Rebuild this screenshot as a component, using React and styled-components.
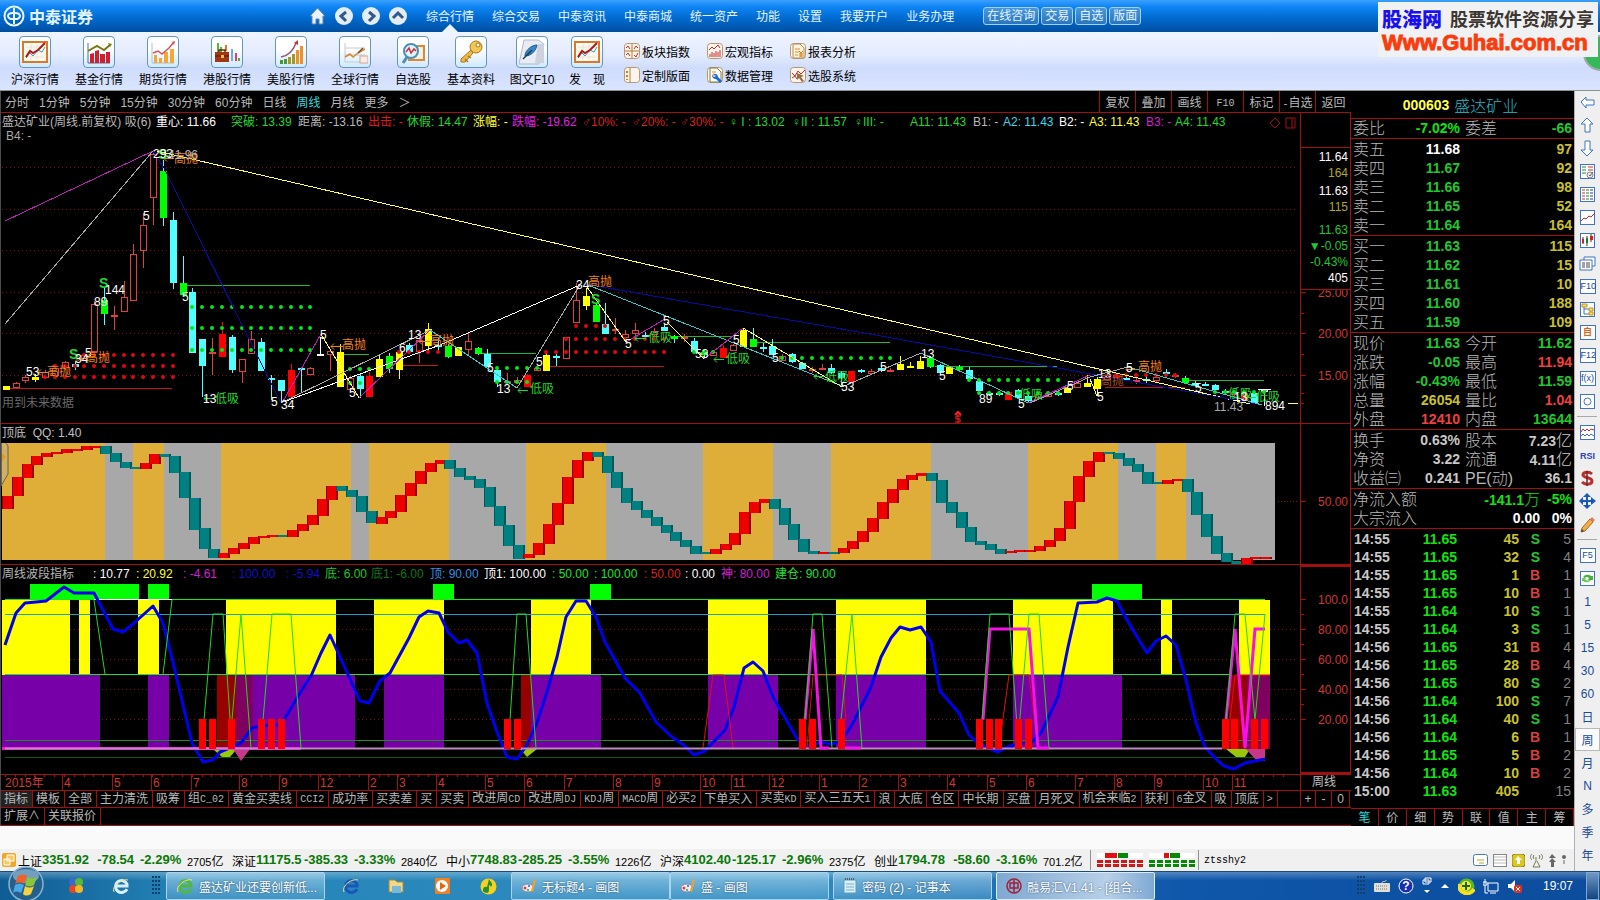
import React, { useState } from 'react';
import styled, { createGlobalStyle } from 'styled-components';

const GlobalStyle = createGlobalStyle`
  * {
    box-sizing: border-box;
  }
  body {
    margin: 0;
    background: #000;
    font-family: 'Liberation Sans', 'Noto Sans CJK SC', sans-serif;
    font-size: 12px;
  }
  button {
    margin: 0;
    padding: 0;
    border: none;
    background: none;
    color: inherit;
    font: inherit;
    cursor: pointer;
  }
  a {
    color: inherit;
    text-decoration: none;
  }
  svg {
    display: block;
    flex: none;
  }
`;

const RED = '#a01010';
const STEP = 9.83;

const Page = styled.div`
  position: relative;
  display: flex;
  flex-direction: column;
  min-height: 100vh;
  overflow: hidden;
`;

/* ---------- top bar ---------- */

const TopBar = styled.header`
  display: flex;
  align-items: center;
  height: 32px;
  padding-left: 3px;
  color: #e4f4ff;
  white-space: nowrap;
  background: linear-gradient(#3ba0ff 0%, #0d84f4 22%, #0068cc 60%, #004f9f 100%);
`;

const Brand = styled.div`
  display: flex;
  align-items: center;
  gap: 4px;
  width: 306px;
  font-size: 16px;
  font-weight: bold;
`;

const RoundNav = styled.div`
  display: flex;
  align-items: center;
  gap: 9px;
  width: 117px;
`;

const MenuBar = styled.nav`
  display: flex;
  gap: 18px;
  height: 32px;
  line-height: 34px;
  margin-right: 29px;
`;

const MenuLink = styled.a`
  position: relative;
  height: 32px;
  &::after {
    content: '';
    display: ${(p) => (p.$active ? 'block' : 'none')};
    position: absolute;
    left: 50%;
    bottom: 0;
    margin-left: -8px;
    border: 8px solid transparent;
    border-top: none;
    border-bottom-color: #eef4ff;
  }
`;

const QuickList = styled.div`
  display: flex;
  gap: 2px;
`;

const QuickButton = styled.button`
  height: 18px;
  padding: 0 3px;
  border: 1px solid #9fd0f8;
  border-radius: 3px;
  line-height: 16px;
  background: linear-gradient(#4a98dc, #2a74bc);
`;

const Watermark = styled.aside`
  position: absolute;
  top: 2px;
  right: 2px;
  width: 220px;
  height: 55px;
  padding: 3px 4px;
  background: #f0f1f3;
  white-space: nowrap;
`;

const WatermarkTop = styled.div`
  display: flex;
  align-items: center;
  gap: 8px;
  height: 26px;
  color: #3c3530;
  font-size: 18px;
  font-weight: bold;
  b {
    color: #1a10f0;
    font-size: 20px;
    font-weight: 900;
  }
`;

const WatermarkUrl = styled.a`
  display: block;
  color: #fa3c0c;
  font-size: 22px;
  font-weight: 900;
  line-height: 24px;
  -webkit-text-stroke: 1px #fa3c0c;
`;

const GreenBall = styled.div`
  position: absolute;
  top: 35px;
  right: -19px;
  width: 36px;
  height: 36px;
  border: 2px solid #9aa;
  border-radius: 50%;
  background: #35b85a;
`;

/* ---------- tool bar ---------- */

const ToolBar = styled.div`
  display: flex;
  height: 59px;
  padding-left: 3px;
  border-bottom: 1px solid #8a9490;
  color: #000;
  background: linear-gradient(#eff4ff 0%, #e3ebfe 40%, #cfdcfb 62%, #d9e4ff 100%);
`;

const BigTool = styled.button`
  display: flex;
  flex-direction: column;
  align-items: center;
  width: ${(p) => p.$w}px;
  padding-top: 4px;
  line-height: 18px;
  white-space: pre;
`;

const ToolFrame = styled.span`
  display: grid;
  place-items: center;
  width: 32px;
  height: 32px;
  margin-bottom: 3px;
  border: 1px solid #6796bd;
  border-radius: 4px;
  background: linear-gradient(#ffffff 40%, #cfe9fc);
`;

const SmallTools = styled.div`
  display: grid;
  grid-template-columns: repeat(3, 83px);
  grid-template-rows: 24px 24px;
  margin-left: 11px;
  padding-top: 7px;
`;

const SmallTool = styled.button`
  display: flex;
  align-items: center;
  gap: 2px;
`;

/* ---------- work area ---------- */

const WorkArea = styled.div`
  display: flex;
  flex: 1;
`;

const LeftPart = styled.div`
  display: flex;
  flex: 1;
  flex-direction: column;
  min-width: 0;
`;

const Workspace = styled.main`
  display: flex;
  border-left: 1px solid #4a4a4a;
  background: #000;
`;

const ChartColumn = styled.section`
  flex: 1;
  min-width: 0;
`;

const PeriodBar = styled.div`
  display: flex;
  align-items: center;
  height: 22px;
  padding-left: 4px;
  border-bottom: 1px solid ${RED};
  color: #b8b8b8;
  white-space: nowrap;
`;

const Periods = styled.div`
  display: flex;
  flex: 1;
  gap: 10px;
`;

const PeriodButton = styled.button`
  color: ${(p) => (p.$active ? '#30d8d8' : '#b8b8b8')};
`;

const ChartAction = styled.button`
  width: 36px;
  height: 21px;
  border-left: 1px solid ${RED};
`;

const Panel = styled.div`
  display: flex;
  border-bottom: 1px solid ${RED};
`;

const Plot = styled.div`
  flex: 1;
  min-width: 0;
  overflow: hidden;
`;

const Legend = styled.div`
  display: flex;
  flex-wrap: nowrap;
  height: ${(p) => p.$h}px;
  padding: 1px 1px 0;
  line-height: 17px;
  white-space: nowrap;
`;

const LegendItem = styled.span`
  flex: none;
  width: ${(p) => (p.$w ? p.$w + 'px' : 'auto')};
  color: ${(p) => p.$c};
`;

const LegendTail = styled.div`
  display: flex;
  gap: 4px;
  margin-left: auto;
  padding: 3px 3px 0 0;
`;

const LegendLine = styled.div`
  height: 12px;
  padding-left: 5px;
  color: #a8a8a8;
  line-height: 12px;
`;

const Axis = styled.div`
  flex: none;
  width: 51px;
  border-left: 1px solid ${RED};
  border-right: 1px solid ${RED};
`;

const BoxedAxis = styled(Axis)`
  border: 2px solid ${RED};
  border-right-width: 1px;
  border-left-width: 1px;
`;

const PriceBox = styled.div`
  display: flex;
  flex-direction: column;
  margin-top: 34px;
  height: 143px;
  padding: 1px 2px;
  border-top: 1px solid ${RED};
  border-bottom: 1px solid ${RED};
  text-align: right;
  line-height: 16px;
`;

const PriceGroup = styled.div`
  margin-bottom: ${(p) => p.$gap}px;
`;

const PriceLine = styled.div`
  color: ${(p) => p.$c};
`;

const PeriodName = styled.div`
  flex: none;
  width: 51px;
  padding-left: 11px;
  border-left: 1px solid ${RED};
  color: #c0c0c0;
  line-height: 14px;
`;

const TabRow = styled.div`
  display: flex;
  height: ${(p) => p.$h}px;
  border-bottom: 1px solid ${RED};
  color: #b8b8b8;
  white-space: nowrap;
`;

const TabList = styled.div`
  display: flex;
  flex: 1;
  min-width: 0;
`;

const Tab = styled.button`
  flex: none;
  padding: 0 4px 0 3px;
  border-right: 1px solid ${RED};
  line-height: 15px;
  background: ${(p) => (p.$active ? '#222' : 'none')};
`;

const Latin = styled.span`
  font-family: 'Liberation Mono', monospace;
  font-size: 10px;
`;

const ZoomBox = styled.div`
  display: grid;
  grid-template-columns: 15px 16px 18px;
  flex: none;
  width: 51px;
  border-left: 1px solid ${RED};
  button {
    border-right: 1px solid ${RED};
  }
`;

/* ---------- quote panel ---------- */

const QuotePanel = styled.section`
  display: flex;
  flex: none;
  flex-direction: column;
  width: 223px;
  color: #b8b8b8;
  font-size: 16px;
`;

const QuoteTitle = styled.h1`
  display: flex;
  align-items: center;
  justify-content: center;
  gap: 5px;
  height: 28px;
  margin: 0;
  padding-right: 4px;
  border-bottom: 1px solid ${RED};
  color: #28b8c8;
  font-size: 16px;
  font-weight: 300;
  b {
    color: #ffff50;
    font-size: 14px;
    font-weight: bold;
  }
`;

const QuoteBlock = styled.div`
  padding: ${(p) => p.$pad || '1px'} 2px 0;
  border-bottom: 1px solid ${RED};
`;

const QuoteRow = styled.div`
  display: grid;
  grid-template-columns: 1fr 1fr;
  column-gap: 5px;
  height: 19px;
  line-height: 19px;
  white-space: nowrap;
`;

const QuoteCell = styled.div`
  display: flex;
  justify-content: space-between;
  font-weight: 300;
`;

const Figure = styled.b`
  color: ${(p) => p.$c};
  font-size: 14px;
  font-weight: bold;
  i {
    font-size: 16px;
    font-style: normal;
    font-weight: 300;
  }
`;

const FlowRow = styled.div`
  display: grid;
  grid-template-columns: 1fr auto 32px;
  height: 19px;
  line-height: 19px;
  font-weight: 300;
  text-align: right;
  white-space: nowrap;
  span {
    text-align: left;
  }
`;

const TickTable = styled.table`
  width: 100%;
  margin-top: 1px;
  border-collapse: collapse;
  font-size: 14px;
  font-weight: bold;
  td {
    height: 18px;
    padding: 0;
    line-height: 18px;
    text-align: right;
  }
  td:first-child {
    width: 39px;
    padding-left: 3px;
    color: #c8c8c8;
    text-align: left;
  }
  td:nth-child(2) {
    width: 67px;
    color: #14e014;
  }
  td:nth-child(3) {
    width: 62px;
    color: #c8c030;
  }
  td:nth-child(4) {
    width: 21px;
    color: #20c830;
  }
  td:nth-child(4)[data-side='B'] {
    color: #d84040;
  }
  td:last-child {
    padding-right: 3px;
    color: #808080;
    font-weight: normal;
  }
`;

const QuoteTabs = styled.div`
  display: grid;
  grid-template-columns: repeat(8, 1fr);
  height: 18px;
  margin-top: auto;
  border-top: 1px solid ${RED};
  color: #b8b8b8;
  font-size: 12px;
  button {
    border-right: 1px solid ${RED};
    line-height: 16px;
  }
  button[aria-pressed='true'] {
    color: #30d8d8;
  }
`;

/* ---------- side bar ---------- */

const SideBar = styled.aside`
  flex: none;
  width: 26px;
  border-left: 1px solid #b0b0b0;
  background: #efefef;
  color: #1a4a9a;
`;

const SideButton = styled.button`
  display: grid;
  place-items: center;
  width: 25px;
  height: 23px;
  border: ${(p) => (p.$active ? '1px solid #b8b8b8' : 'none')};
  background: ${(p) => (p.$active ? '#fafafa' : 'none')};
  color: ${(p) => p.$c || '#1a4a9a'};
  font-size: ${(p) => p.$size || 12}px;
  font-weight: ${(p) => (p.$bold ? 'bold' : 'normal')};
`;

const SideBox = styled.span`
  width: 16px;
  height: 15px;
  border: 1px solid #3f74c4;
  background: #fff;
  font-size: 9px;
  line-height: 13px;
  text-align: center;
`;

const SideLine = styled.hr`
  width: 20px;
  height: 1px;
  margin: 3px 2px 4px;
  border: none;
  background: #a8a8a8;
`;

/* ---------- bottom ---------- */

const Blank = styled.div`
  flex: 1;
  min-height: 23px;
  background: #fafafa;
`;

const StatusBar = styled.footer`
  display: flex;
  align-items: center;
  height: 22px;
  padding-left: 2px;
  background: #f0f0f0;
  color: #000;
  white-space: nowrap;
`;

const IndexQuote = styled.div`
  display: grid;
  grid-template-columns: 24px 48px 44px 53px 45px;
  margin-left: ${(p) => (p.$first ? '2px' : '0')};
  b {
    color: #087808;
    font-size: 13px;
  }
  b:nth-of-type(2) {
    text-align: right;
  }
  b:nth-of-type(3) {
    padding-left: 6px;
  }
  small {
    font-size: 11px;
  }
`;

const LightBox = styled.div`
  height: 20px;
  margin-left: 2px;
  padding: 3px 3px 0 6px;
  border-left: 1px solid #909090;
  border-right: 1px solid #909090;
`;

const UserName = styled.span`
  flex: 1;
  padding-left: 5px;
  font-family: 'Liberation Mono', monospace;
  font-size: 10px;
`;

const StatusIcons = styled.div`
  display: flex;
  align-items: center;
  gap: 5px;
  padding-right: 7px;
`;

const TaskBar = styled.footer`
  position: relative;
  display: flex;
  align-items: center;
  height: 29px;
  padding-left: 56px;
  color: #fff;
  border-top: 1px solid #1c4c78;
  white-space: nowrap;
  background: linear-gradient(rgba(255, 255, 255, 0.28), rgba(255, 255, 255, 0) 30%),
    linear-gradient(90deg, #0e5c94 0%, #2685b8 12%, #2f8cc0 50%, #0f57aa 74%, #0c4c9c 100%);
`;

const StartButton = styled.button`
  position: absolute;
  left: 8px;
  bottom: -2px;
`;

const LaunchIcon = styled.button`
  display: grid;
  place-items: center;
  width: ${(p) => p.$w}px;
  height: 28px;
`;

const TaskButton = styled.button`
  display: flex;
  align-items: center;
  gap: 5px;
  width: 159px;
  height: 28px;
  margin-right: ${(p) => (p.$joined ? 0 : 4)}px;
  padding-left: ${(p) => p.$pad || 9}px;
  border: 1px solid ${(p) => (p.$active ? '#d8ecfa' : '#a8d4ec')};
  border-radius: 2px;
  background: ${(p) =>
    p.$active
      ? 'linear-gradient(90deg, #7fa8d2, #b8d0e8 70%, #7fa9d4)'
      : 'linear-gradient(rgba(190, 225, 245, 0.6), rgba(90, 165, 210, 0.45))'};
  text-shadow: 0 0 2px #246;
`;

const Tray = styled.div`
  display: flex;
  align-items: center;
  gap: 8px;
  margin-left: auto;
`;

const Clock = styled.time`
  margin: 0 5px 0 12px;
`;

const ShowDesktop = styled.button`
  width: 13px;
  height: 28px;
  margin-right: 1px;
  border: 1px solid #7ea8d0;
  background: linear-gradient(#6f98c4, #14447e);
`;

/* ---------- data ---------- */

const menu = ['综合行情', '综合交易', '中泰资讯', '中泰商城', '统一资产', '功能', '设置', '我要开户', '业务办理'];
const quick = ['在线咨询', '交易', '自选', '版面'];
const periods = ['分时', '1分钟', '5分钟', '15分钟', '30分钟', '60分钟', '日线', '周线', '月线', '更多', '＞'];
const actions = ['复权', '叠加', '画线', 'F10', '标记', '-自选', '返回'];

const bigTools = [
  ['沪深行情', 64, 'frame'],
  ['基金行情', 64, 'redbars'],
  ['期货行情', 64, 'orangebars'],
  ['港股行情', 64, 'bag'],
  ['美股行情', 64, 'rise'],
  ['全球行情', 64, 'global'],
  ['自选股', 52, 'magnifier'],
  ['基本资料', 64, 'key'],
  ['图文F10', 58, 'pen'],
  ['发　现', 52, 'frame'],
];

const smallTools = [
  ['板块指数', 'cross'],
  ['宏观指标', 'bars'],
  ['报表分析', 'sheet'],
  ['定制版面', 'layout'],
  ['数据管理', 'wrench'],
  ['选股系统', 'pick'],
];

const legend1 = [
  ['盛达矿业(周线.前复权) 吸(6)', '#b8b8b8', 154],
  ['重心: 11.66', '#ffffff', 75],
  ['突破: 13.39', '#20d830', 67],
  ['距离: -13.16', '#b8b8b8', 70],
  ['出击: -', '#e01818', 39],
  ['休假: 14.47', '#20d830', 66],
  ['涨幅: -', '#ffff30', 39],
  ['跌幅: -19.62', '#e020e0', 70],
  ['♂10%: -', '#d82020', 50],
  ['♂20%: -', '#d82020', 48],
  ['♂30%: -', '#d82020', 49],
  ['♀ I : 13.02', '#20d830', 63],
  ['♀II : 11.57', '#20d830', 62],
  ['♀III: -', '#20d830', 56],
  ['A11: 11.43', '#20d830', 63],
  ['B1: -', '#b8b8b8', 30],
  ['A2: 11.43', '#38d8e8', 56],
  ['B2: -', '#ffffff', 30],
  ['A3: 11.43', '#ffff30', 57],
  ['B3: -', '#d020d0', 29],
  ['A4: 11.43', '#20d830'],
];

const legend3 = [
  ['周线波段指标', '#b8b8b8', 91],
  [': 10.77', '#ffffff', 43],
  [': 20.92', '#ffff30', 47],
  [': -4.61', '#d020d0', 49],
  [': 100.00', '#1010c0', 54],
  [': -5.94', '#1010c0', 39],
  ['底: 6.00', '#20c830', 46],
  ['底1: -6.00', '#107818', 59],
  ['顶: 90.00', '#3890e0', 54],
  ['顶1: 100.00', '#ffffff', 68],
  [': 50.00', '#20e030', 42],
  [': 100.00', '#20e030', 50],
  [': 50.00', '#d82020', 41],
  [': 0.00', '#ffffff', 36],
  ['神: 80.00', '#d020d0', 54],
  ['建仓: 90.00', '#20e030'],
];

const tabs = [
  '指标', '模板', '全部', '主力清洗', '吸筹', '组C_02', '黄金买卖线', 'CCI2', '成功率', '买卖差', '买',
  '买卖', '改进周CD', '改进周DJ', 'KDJ周', 'MACD周', '必买2', '下单买入', '买卖KD', '买入三五天1', '浪',
  '大底', '仓区', '中长期', '买盘', '月死叉', '机会来临2', '获利', '6金叉', '吸', '顶底', '>',
];

// [index, kind, high, top, bottom, low]
const candles = [
  [0, 'y', 386, 386, 390, 390], [1, 'r', 382, 383, 388, 388], [2, 'r', 375, 377, 381, 383],
  [3, 'y', 374, 377, 380, 382], [4, 'r', 370, 372, 378, 379], [5, 'r', 366, 368, 376, 376],
  [6, 'r', 361, 362, 368, 370], [7, 'c', 361, 364, 367, 370], [8, 'r', 354, 355, 361, 361],
  [9, 'r', 301, 304, 352, 352], [10, 'g', 288, 300, 314, 325], [11, 'r', 306, 315, 316, 330],
  [12, 'r', 281, 297, 312, 312], [13, 'r', 244, 254, 301, 301], [14, 'r', 213, 225, 251, 268],
  [15, 'r', 150, 154, 198, 225], [16, 'g', 160, 171, 218, 226], [17, 'c', 212, 220, 283, 289],
  [18, 'g', 256, 283, 295, 295], [19, 'c', 288, 292, 353, 353], [20, 'c', 339, 339, 366, 397],
  [21, 'r', 338, 352, 353, 375], [22, 'R', 322, 334, 357, 357], [23, 'c', 335, 337, 370, 373],
  [24, 'r', 359, 359, 372, 383], [25, 'r', 331, 339, 354, 354], [26, 'c', 338, 342, 371, 371],
  [27, 'c', 375, 378, 379, 400], [28, 'c', 380, 380, 391, 403], [29, 'R', 364, 370, 397, 397],
  [30, 'c', 368, 368, 370, 393], [31, 'r', 367, 368, 375, 375], [32, 'w', 337, 354, 356, 356],
  [33, 'r', 350, 351, 355, 371], [34, 'y', 344, 352, 387, 387], [35, 'r', 376, 378, 390, 392],
  [36, 'c', 374, 376, 389, 398], [37, 'R', 372, 376, 397, 397], [38, 'y', 354, 359, 377, 377],
  [39, 'g', 353, 356, 369, 373], [40, 'y', 352, 352, 370, 379], [41, 'c', 343, 345, 352, 354],
  [42, 'r', 338, 340, 352, 363], [43, 'y', 323, 329, 346, 351], [44, 'c', 338, 345, 346, 352],
  [45, 'g', 344, 346, 357, 358], [46, 'y', 347, 347, 356, 356], [47, 'r', 333, 341, 350, 355],
  [48, 'g', 347, 348, 354, 355], [49, 'c', 349, 354, 367, 367], [50, 'c', 368, 370, 382, 387],
  [51, 'r', 373, 381, 383, 383], [52, 'r', 377, 380, 383, 384], [53, 'R', 374, 375, 387, 387],
  [54, 'r', 366, 368, 371, 371], [55, 'y', 353, 355, 371, 371], [56, 'c', 354, 356, 358, 366],
  [57, 'r', 337, 337, 359, 359], [58, 'r', 283, 300, 323, 323], [59, 'y', 288, 296, 306, 310],
  [60, 'g', 303, 305, 322, 322], [61, 'c', 303, 324, 334, 334], [62, 'r', 318, 329, 331, 334],
  [63, 'r', 330, 334, 338, 342], [64, 'r', 323, 330, 334, 338], [65, 'c', 332, 335, 336, 338],
  [66, 'r', 328, 331, 335, 336], [67, 'c', 324, 327, 331, 331], [68, 'g', 335, 336, 339, 343],
  [69, 'r', 334, 337, 338, 342], [70, 'c', 338, 341, 352, 352], [71, 'g', 350, 352, 355, 358],
  [72, 'r', 350, 352, 356, 356], [73, 'R', 345, 348, 358, 358], [74, 'r', 344, 345, 351, 351],
  [75, 'y', 328, 330, 347, 347], [76, 'g', 328, 339, 347, 347], [77, 'c', 343, 347, 348, 352],
  [78, 'c', 339, 346, 355, 355], [79, 'r', 354, 356, 361, 361], [80, 'c', 353, 354, 362, 363],
  [81, 'c', 362, 363, 369, 369], [82, 'r', 367, 369, 370, 373], [83, 'r', 364, 368, 369, 370],
  [84, 'c', 364, 368, 373, 374], [85, 'c', 371, 373, 378, 386], [86, 'R', 371, 371, 382, 382],
  [87, 'c', 369, 370, 372, 373], [88, 'r', 369, 371, 374, 375], [89, 'c', 366, 368, 371, 372],
  [90, 'r', 368, 370, 372, 372], [91, 'y', 356, 364, 370, 370], [92, 'y', 362, 366, 367, 368],
  [93, 'y', 356, 361, 369, 369], [94, 'g', 356, 358, 367, 368], [95, 'c', 364, 365, 373, 373],
  [96, 'y', 366, 367, 374, 374], [97, 'g', 365, 367, 370, 371], [98, 'c', 367, 370, 379, 381],
  [99, 'c', 380, 381, 391, 391], [100, 'c', 391, 393, 394, 396], [101, 'c', 391, 393, 394, 396],
  [102, 'R', 391, 392, 400, 400], [103, 'c', 389, 390, 398, 398], [104, 'c', 394, 396, 401, 402],
  [105, 'r', 393, 394, 398, 399], [106, 'r', 391, 393, 397, 397], [107, 'c', 391, 393, 394, 396],
  [108, 'y', 387, 388, 393, 393], [109, 'r', 382, 383, 388, 388], [110, 'y', 375, 383, 387, 387],
  [111, 'y', 377, 379, 389, 396], [112, 'r', 374, 376, 380, 381], [113, 'R', 374, 375, 378, 378],
  [114, 'c', 375, 378, 379, 381], [115, 'r', 377, 380, 381, 384], [116, 'c', 376, 379, 380, 384],
  [117, 'r', 376, 377, 381, 382], [118, 'c', 369, 372, 374, 376], [119, 'r', 373, 375, 376, 378],
  [120, 'g', 376, 378, 383, 384], [121, 'c', 381, 383, 386, 386], [122, 'c', 382, 384, 385, 386],
  [123, 'c', 384, 385, 390, 390], [124, 'c', 389, 391, 393, 395], [125, 'r', 390, 392, 395, 397],
  [126, 'R', 392, 393, 400, 400], [127, 'c', 391, 393, 403, 403], [128, 'w', 389, 390, 391, 406],
];

const candleColors = { y: '#ffff00', r: '#e04040', R: '#ff0000', c: '#50ffff', g: '#00ff00', w: '#ffffff' };

// [colour, points]
const zigzags = [
  ['#c020c0', '5,221 153,151'],
  ['#a8a8a8', '5,324 153,151'],
  ['#ffff50', '157,151 1250,404'],
  ['#0808a8', '153,151 164,168 281,403'],
  ['#0808a8', '585,284 870,334 1257,404'],
  ['#38c8c8', '588,285 842,386'],
  ['#ffffff', '283,402 440,345 580,285'],
  ['#a8a8a8', '283,402 430,330'],
  ['#c020c0', '282,403 321,334'],
  ['#ffff50', '321,334 359,398'],
  ['#c020c0', '359,398 430,330'],
  ['#38c8c8', '430,330 517,388'],
  ['#a8a8a8', '517,388 580,285'],
  ['#ffff50', '587,287 626,342'],
  ['#c020c0', '626,342 665,319'],
  ['#ffff50', '667,322 704,359'],
  ['#c020c0', '704,359 743,328'],
  ['#ffff50', '743,328 842,387'],
  ['#a8a8a8', '842,387 921,353'],
  ['#38c8c8', '921,353 1028,403'],
  ['#c020c0', '1028,403 1090,375'],
  ['#a8a8a8', '1030,403 1090,377 1128,367'],
  ['#ffff50', '1090,379 1097,396'],
  ['#38c8c8', '1128,367 1262,405'],
];

// [colour, x1, x2, y]
const levels = [
  ['#c01818', 8, 172, 388],
  ['#20b828', 185, 310, 285],
  ['#20b828', 340, 369, 354],
  ['#c01818', 400, 438, 365],
  ['#20b828', 478, 536, 353],
  ['#c01818', 545, 664, 366],
  ['#20b828', 672, 732, 336],
  ['#20b828', 750, 890, 342],
  ['#20b828', 935, 1057, 366],
  ['#c01818', 1105, 1185, 387],
  ['#20b828', 1187, 1264, 380],
  ['#ffffff', 1258, 1271, 389],
  ['#ffff50', 1288, 1298, 403],
];

// [colour, first index, last index, y]
const dotRows = [
  ['#00e818', 19, 31, 307], ['#00e818', 19, 31, 328], ['#00e818', 19, 31, 350],
  ['#e00810', 8, 17, 355], ['#e00810', 5, 17, 366], ['#e00810', 4, 17, 377],
  ['#00e818', 35, 37, 369], ['#00e818', 35, 36, 383], ['#e00810', 40, 44, 352],
  ['#00e818', 50, 54, 368], ['#00e818', 50, 53, 382], ['#e00810', 58, 61, 326],
  ['#e00810', 57, 67, 339], ['#e00810', 55, 67, 352], ['#00e818', 70, 72, 352],
  ['#00e818', 79, 90, 358], ['#00e818', 98, 107, 380], ['#00e818', 99, 107, 393],
  ['#e00810', 113, 119, 375], ['#00e818', 123, 128, 392],
];

const W = '#ffffff';
const O = '#f08020';
const G = '#20d830';
const marks = [
  ['S', G, 99, 284, 1], ['S', G, 69, 355, 1], ['S', G, 158, 155, 1], ['144', W, 105, 290], ['89', W, 94, 302],
  ['5', W, 143, 216], ['5', W, 182, 297], ['53', W, 26, 372], ['34', W, 75, 359], ['5', W, 85, 353],
  ['高抛', O, 174, 159], ['高抛', O, 86, 358], ['高抛', O, 47, 372], ['293', W, 153, 154],
  ['41.96', '#b8b8b8', 168, 155], ['13', W, 203, 399], ['低吸', G, 215, 399], ['5', W, 271, 402],
  ['34', W, 281, 405], ['5', W, 320, 335], ['高抛', O, 342, 345], ['5', W, 349, 393], ['13', W, 408, 335],
  ['6', W, 399, 348], ['高抛', O, 430, 341], ['5', W, 487, 368], ['13', W, 497, 389], ['低吸', G, 530, 389],
  ['5', W, 536, 362], ['34', W, 576, 285], ['高抛', O, 588, 282], ['S', G, 591, 300, 1], ['5', W, 625, 344],
  ['低吸', G, 648, 338], ['5', W, 663, 321], ['53', W, 695, 354], ['低吸', G, 726, 359], ['5', W, 733, 340],
  ['5', W, 772, 358], ['低吸', G, 825, 377], ['53', W, 841, 387], ['5', W, 880, 367], ['13', W, 921, 354],
  ['5', W, 939, 376], ['89', W, 979, 399], ['低吸', G, 1019, 395], ['5', W, 1018, 404], ['5', W, 1067, 386],
  ['高抛', O, 1138, 367], ['13', W, 1098, 374], ['高抛', '#a85020', 1100, 381], ['5', W, 1126, 368],
  ['5', W, 1097, 397], ['5', W, 1195, 388], ['低吸', G, 1228, 394], ['13', W, 1234, 397],
  ['低吸', G, 1256, 397], ['11.43', '#a8a8a8', 1214, 407], ['894', W, 1265, 406], ['用到未来数据', '#686868', 2, 403],
];

const arrows = [
  [38, 48, 372], [76, 86, 358], [164, 174, 158], [204, 214, 398], [331, 343, 346], [419, 430, 341], [518, 528, 390],
  [635, 646, 338], [714, 724, 359], [814, 824, 376], [1126, 1136, 369], [1246, 1256, 397],
];

const goldBands = [
  [2, 105], [133, 164], [221, 351], [369, 449], [526, 606], [703, 773], [831, 931], [1028, 1118], [1156, 1186],
];

// one height for each week, a bar is drawn between two of them
const waves = [
  264, 227, 172, 133, 108, 99, 96, 88, 87, 78, 78, 100, 125, 140, 143, 129, 102, 109, 157, 233, 325, 386, 411,
  400, 385, 370, 351, 349, 346, 348, 330, 312, 286, 237, 198, 211, 229, 274, 308, 291, 274, 225, 190, 154, 129,
  120, 143, 167, 176, 200, 257, 314, 374, 413, 403, 369, 312, 249, 171, 120, 96, 109, 157, 203, 244, 269, 290,
  314, 335, 359, 377, 397, 399, 388, 372, 339, 276, 246, 237, 263, 311, 356, 392, 398, 397, 398, 385, 364, 333,
  295, 246, 207, 177, 165, 159, 179, 245, 275, 320, 362, 371, 386, 398, 394, 391, 390, 378, 360, 325, 243, 168,
  123, 96, 98, 113, 133, 155, 187, 188, 180, 178, 215, 281, 347, 398, 422, 429, 415, 412, 411,
];

const yellowBands = [
  [2, 70], [79, 90], [138, 159], [226, 336], [374, 444], [531, 591], [708, 768], [836, 926], [1013, 1113],
  [1161, 1172], [1239, 1270],
];
const purpleBands = [
  [2, 100, '#7800a8'], [148, 169, '#7800a8'], [217, 236, '#980000'], [236, 253, '#800060'], [253, 355, '#7800a8'],
  [384, 444, '#7800a8'], [521, 531, '#980000'], [531, 601, '#7800a8'], [708, 778, '#7800a8'],
  [836, 926, '#7800a8'], [1013, 1122, '#7800a8'], [1229, 1247, '#980000'], [1247, 1270, '#800060'],
];
const greenBlocks = [[30, 139], [148, 169], [433, 454], [590, 611], [1092, 1142]];
const redBars = [
  199, 209, 228, 258, 268, 278, 504, 514, 799, 809, 838, 976, 986, 995, 1015, 1025, 1222, 1231, 1251, 1261,
];

const blueLine =
  '5,645 16,613 25,603 36,602 46,601 64,587 74,593 94,593 113,629 123,632 133,624 153,606 163,623 173,662 192,743 203,762 213,760 220,752 241,743 252,728 269,725 281,725 300,693 311,676 321,653 330,635 340,657 360,701 369,703 380,681 390,673 409,638 419,617 428,611 439,613 448,632 459,643 467,640 477,653 487,703 497,732 507,757 517,759 527,745 537,723 547,692 557,657 566,617 576,601 586,601 596,617 605,642 625,678 640,693 656,722 672,737 685,746 694,755 705,751 725,730 734,707 744,668 753,662 763,671 773,697 798,740 805,747 821,742 830,744 841,742 853,723 871,687 881,657 891,638 900,627 910,630 921,627 931,642 940,691 959,713 969,735 979,744 998,752 1009,746 1032,742 1041,733 1058,697 1068,647 1078,603 1097,602 1107,598 1117,601 1127,620 1147,653 1156,641 1166,636 1176,645 1186,680 1196,723 1205,747 1215,758 1224,766 1234,769 1245,763 1265,759';

const greenLines = [
  '94,600 105,674', '172,600 163,674', '204,720 213,614 223,614 232,748', '232,720 241,614 251,748',
  '263,720 272,614 291,614 301,748', '510,720 517,614 526,614 536,748', '805,720 813,614 822,614 832,748',
  '841,720 852,614 862,748', '982,720 990,614 1009,614 1018,740 1029,614 1039,614 1049,748',
  '1226,720 1235,614 1245,614 1255,720 1265,614',
];
const redLines = [
  '703,748 713,675 724,675 733,748', '807,748 813,675 842,675 846,720', '999,748 1009,675 1029,675 1038,748',
  '1230,720 1235,675 1270,675',
];
const magentaLines = [
  '805,720 813,629 821,748 829,748', '845,748 861,748', '983,720 990,629 1029,629 1038,748 1049,748',
  '1226,720 1235,629 1245,748 1255,629 1265,629',
];

const months = [
  ['2015年', 5], ['4', 64], ['5', 114], ['6', 153], ['7', 193], ['8', 241], ['9', 281], ['12', 320], ['2', 370],
  ['3', 399], ['4', 438], ['5', 487], ['6', 526], ['7', 566], ['8', 615], ['9', 654], ['10', 702], ['11', 733],
  ['12', 771], ['1', 821], ['2', 861], ['3', 900], ['4', 949], ['5', 989], ['6', 1028], ['7', 1077], ['8', 1116],
  ['9', 1156], ['10', 1205], ['11', 1234],
];

const up = '#f04040';
const down = '#20c830';
const volume = '#c8c030';
const plain = '#c8c8c8';

const sells = [['卖五', '11.68', '97'], ['卖四', '11.67', '92'], ['卖三', '11.66', '98'], ['卖二', '11.65', '52'], ['卖一', '11.64', '164']];
const buys = [['买一', '11.63', '115'], ['买二', '11.62', '15'], ['买三', '11.61', '10'], ['买四', '11.60', '188'], ['买五', '11.59', '109']];
const stats = [
  ['现价', '11.63', down, '今开', '11.62', down],
  ['涨跌', '-0.05', down, '最高', '11.94', up],
  ['涨幅', '-0.43%', down, '最低', '11.59', down],
  ['总量', '26054', volume, '量比', '1.04', up],
  ['外盘', '12410', up, '内盘', '13644', down],
];
const basics = [
  ['换手', '0.63%', plain, '股本', '7.23', plain, '亿'],
  ['净资', '3.22', plain, '流通', '4.11', plain, '亿'],
  ['收益㈢', '0.241', plain, 'PE(动)', '36.1', plain],
];
const ticks = [
  ['14:55', '11.65', 45, 'S', 5], ['14:55', '11.65', 32, 'S', 4], ['14:55', '11.65', 1, 'B', 1],
  ['14:55', '11.65', 10, 'B', 1], ['14:55', '11.64', 10, 'S', 1], ['14:55', '11.64', 3, 'S', 1],
  ['14:56', '11.65', 31, 'B', 4], ['14:56', '11.65', 28, 'B', 4], ['14:56', '11.65', 80, 'S', 2],
  ['14:56', '11.64', 100, 'S', 7], ['14:56', '11.64', 40, 'S', 1], ['14:56', '11.64', 6, 'B', 1],
  ['14:56', '11.65', 5, 'B', 2], ['14:56', '11.64', 10, 'B', 2], ['15:00', '11.63', 405, '', 15],
];

const indexes = [
  ['上证', '3351.92', '-78.54', '-2.29%', '2705'],
  ['深证', '11175.5', '-385.33', '-3.33%', '2840'],
  ['中小', '7748.83', '-285.25', '-3.55%', '1226'],
  ['沪深', '4102.40', '-125.17', '-2.96%', '2375'],
  ['创业', '1794.78', '-58.60', '-3.16%', '701.2'],
];

/* ---------- icons ---------- */

function ToolIcon({ name }) {
  const art = {
    frame: (
      <>
        <rect x="1" y="3" width="24" height="20" fill="#fffaf0" stroke="#d87828" strokeWidth="2" />
        <path d="M4 8h18M4 13h18M4 18h18M9 5v16M15 5v16" stroke="#e8e0d8" />
        <path d="M4 19l4-5 3 3 5-6 4 2 3-5" fill="none" stroke="#40a0b8" strokeWidth="1" />
        <path d="M4 18l4-6 3 2 5-3 7-7" fill="none" stroke="#b01818" strokeWidth="2" />
      </>
    ),
    redbars: (
      <>
        <path d="M2 4v20h22" fill="none" stroke="#507090" />
        <path d="M4 24v-9l4-1v10zM9 24v-12l4-1v13zM14 24v-9h5v9zM20 24v-11h4v11z" fill="#d02030" />
        <path d="M2 12l9-5 7 4 6-5" fill="none" stroke="#787810" strokeWidth="2" />
        <path d="M22 4l4 1-2 3z" fill="#787810" />
      </>
    ),
    orangebars: (
      <>
        <path d="M2 4v20h22" fill="none" stroke="#b0c0d0" />
        <path d="M4 24v-8h3v8zM9 24v-5h3v5zM14 24v-11h4v11zM20 24v-14h4v14z" fill="#f0a838" />
        <path d="M3 14l5-2 4 3 7-6 5-6" fill="none" stroke="#d85058" strokeWidth="1.5" />
        <path d="M22 3l3-1-1 4z" fill="#d85058" />
      </>
    ),
    bag: (
      <>
        <path d="M4 14V4m3 10V8M3 5h2" stroke="#58b838" strokeWidth="2" />
        <path d="M11 12V6h2v6z" fill="#f07020" />
        <path d="M1 13h14v10H1z" fill="#a03818" />
        <path d="M5 13v-2h6v2M1 17h14" fill="none" stroke="#702008" strokeWidth="1.5" />
        <rect x="7" y="16" width="3" height="3" fill="#f0c040" />
        <path d="M17 22V10h2v12z" fill="#60b0f0" />
        <path d="M21 22V14h2v8z" fill="#e83870" />
        <path d="M24 22h2v-3h-2z" fill="#50b030" />
      </>
    ),
    rise: (
      <>
        <path d="M2 25v-4h3v4zM6 25v-5h3v5z" fill="#489838" />
        <path d="M10 25v-7h3v7zM14 25v-10h3v10z" fill="#a09828" />
        <path d="M18 25v-14h3v14zM22 25v-18h3v18z" fill="#f09028" />
        <path d="M3 18c7-1 12-6 15-14" fill="none" stroke="#905868" strokeWidth="1.5" />
        <path d="M16 4l4-3v5z" fill="#c03830" />
      </>
    ),
    global: (
      <>
        <path d="M3 4v19h21M3 9h20M3 16h20" fill="none" stroke="#c0ccd8" />
        <path d="M3 18l5-3 3 3 5-4 7-4" fill="none" stroke="#d88828" strokeWidth="1.5" />
        <path d="M16 14l5-5" stroke="#705028" strokeWidth="1.5" />
        <rect x="18" y="17" width="8" height="7" fill="#f8ece8" stroke="#d8a098" />
      </>
    ),
    magnifier: (
      <>
        <rect x="9" y="7" width="15" height="14" fill="#f8f0e0" stroke="#e08830" strokeWidth="2" />
        <circle cx="11" cy="12" r="7" fill="#e4f4fc" stroke="#4890b8" strokeWidth="2" />
        <path d="M6 13l3-4 2 5 3-4 2 2" fill="none" stroke="#d03038" strokeWidth="1.5" />
        <path d="M7 18l-4 6" stroke="#4890b8" strokeWidth="3" />
      </>
    ),
    key: (
      <>
        <circle cx="18" cy="8" r="6" fill="#f4c850" stroke="#a87820" />
        <circle cx="20" cy="6" r="2" fill="#fff8e0" stroke="#a87820" />
        <path d="M13 11l2 3-8 9H3v-3z" fill="#f0b840" stroke="#a87820" />
        <path d="M7 20l3 3M10 17l3 2" stroke="#a87820" strokeWidth="1.5" />
      </>
    ),
    pen: (
      <>
        <path d="M5 1h14l6 4-5 20H0z" fill="#e8ecf4" stroke="#b0b8c8" />
        <path d="M19 5h6v19h-9z" fill="#ccd2de" />
        <path d="M6 17c0-6 7-11 12-11-1 6-6 11-12 11z" fill="#3888c8" stroke="#205888" />
        <path d="M4 20l9-9" stroke="#183858" strokeWidth="1.5" />
      </>
    ),
  };
  return (
    <svg width="26" height="26" viewBox="0 0 26 26">
      {art[name]}
    </svg>
  );
}

function SmallIcon({ name }) {
  const art = {
    cross: (
      <>
        <path d="M8 1v14M1 8h14" stroke="#b08030" />
        <path d="M2 5l2-2 2 3M10 6l2-3 2 2M2 12l2-2 2 3M10 12l2 2 2-4" fill="none" stroke="#d02828" />
      </>
    ),
    bars: <path d="M3 14v-3m2 3V9m2 5v-4m2 4V8m2 6V9m2 5V7M2 7l3-3 2 2 4-4 2 3" fill="none" stroke="#c82828" />,
    sheet: (
      <>
        <path d="M3 1h7l4 4v10H3z" fill="#fdf4e0" stroke="#b09050" />
        <path d="M5 6h5M5 9h4M5 12h3" stroke="#d89030" />
        <path d="M9 8l2 2 2-2m-2 2v4m-2-3h4m-4 2h4" fill="none" stroke="#e07818" />
      </>
    ),
    layout: (
      <>
        <path d="M6 1v14" stroke="#b08030" />
        <path d="M3 4v2m0 2v2m0 2v1" stroke="#e07818" strokeWidth="2" />
      </>
    ),
    wrench: (
      <>
        <path d="M3 1h7l4 4v10H3z" fill="#fdfdf4" stroke="#808048" />
        <path d="M5 5h4M5 8h3" stroke="#d89030" />
        <path d="M6 7c2-1 5 0 5 3l4 4-2 2-4-4c-3 0-4-2-4-4l2 2 2-1z" fill="#1868e0" />
      </>
    ),
    pick: (
      <>
        <path d="M2 6l3 3 3-5 3 3 4-4M2 11l3-2 2 3" fill="none" stroke="#d02828" />
        <path d="M7 6l7 3-3 1 3 4-2 1-3-4-2 2z" fill="#907048" />
      </>
    ),
  };
  return (
    <svg width="16" height="16" viewBox="0 0 16 16">
      <rect x="0.5" y="0.5" width="15" height="15" rx="3" fill="#fff4ec" stroke="#b89870" />
      {art[name]}
    </svg>
  );
}

function SideIcon({ name }) {
  const box = <rect x="1.5" y="1.5" width="14" height="14" fill="#fff" stroke="#3f74c4" />;
  const art = {
    left: <path d="M2 8l5-5v3h8v5H7v3z" fill="#fff" stroke="#3f74c4" />,
    up: <path d="M8 1l6 6h-3v8H6V7H2z" fill="#fff" stroke="#3f74c4" />,
    down: <path d="M8 16l6-6h-3V1H6v9H2z" fill="#fff" stroke="#3f74c4" />,
    report: (
      <>
        {box}
        <path d="M3 4h4M3 7h4M3 10h4" stroke="#208828" />
        <path d="M9 4h5M9 7h5" stroke="#d03030" />
        <circle cx="11" cy="12" r="3" fill="#e8e8e8" stroke="#888" />
        <path d="M10 12l1 1 3-4" fill="none" stroke="#666" />
      </>
    ),
    grid: (
      <>
        {box}
        <path d="M3 4h3M3 7h3M3 10h3M3 13h3" stroke="#d03030" />
        <path d="M7 4h3M7 7h3M7 10h3M7 13h3" stroke="#208828" />
        <path d="M11 4h3M11 7h3M11 10h3M11 13h3" stroke="#2038b0" />
      </>
    ),
    line: (
      <>
        {box}
        <path d="M2 12l3-3 2 1 3-3 2 1 4-4" fill="none" stroke="#c02838" />
      </>
    ),
    candle: (
      <>
        {box}
        <path d="M4 5v7M8 4v10M12 2v8" stroke="#333" />
        <path d="M3 7h2v4H3zM11 4h3v4h-3z" fill="#e01818" />
        <path d="M7 6h2v5H7z" fill="#108828" />
      </>
    ),
    pages: (
      <>
        <path d="M5 2h11v9H5z" fill="#fff" stroke="#3f74c4" />
        <path d="M1 5h12v10H1z" fill="#fff" stroke="#3f74c4" />
        <path d="M3 8h3m1 0h4M3 10h3m1 0h4M3 12h3m1 0h4" stroke="#445" />
      </>
    ),
    tree: (
      <>
        {box}
        <path d="M5 6v7h5M5 8h5" fill="none" stroke="#3f74c4" />
        <path d="M3 3h5v3H3zM10 7h4v3h-4zM10 11h4v3h-4z" fill="#f8e060" stroke="#c09820" />
      </>
    ),
    ring: (
      <>
        {box}
        <circle cx="8.5" cy="8.5" r="3.5" fill="none" stroke="#3f74c4" />
      </>
    ),
    waves: (
      <>
        {box}
        <path d="M2 8l2-3 2 2 2-2 2 2 2-2 3 1" fill="none" stroke="#c02838" />
        <path d="M2 12l2-2 2 2 2-2 2 2 2-2 3 2" fill="none" stroke="#5060c0" />
      </>
    ),
    dollar: (
      <>
        <path d="M13 4c-3-3-9-2-9 1s9 2 9 6-7 4-10 1" fill="none" stroke="#b83030" strokeWidth="3" />
        <path d="M8 1v15" stroke="#802020" strokeWidth="1.5" />
      </>
    ),
    move: <path d="M8 0l4 4H9v3h3V4l5 4-5 4V9H9v3h3l-4 4-4-4h3V9H4v3L0 8l4-4v3h3V4H4z" fill="#1858c0" />,
    pencil: (
      <>
        <path d="M3 12l8-9 3 3-8 9-4 1z" fill="#f0b048" stroke="#a06820" />
        <path d="M11 3l2-2 3 3-2 2z" fill="#e87868" />
        <path d="M2 16l1-3 2 2z" fill="#444" />
      </>
    ),
    refresh: (
      <>
        {box}
        <path d="M4 7a5 4 0 0 1 8-1h2v4H9l1-2a3 3 0 0 0-4 0z" fill="#48b040" />
        <path d="M12 10a5 4 0 0 1-8 1H3V8h4l-1 1a3 3 0 0 0 4 1z" fill="#68c858" />
      </>
    ),
  };
  return (
    <svg width="17" height="17" viewBox="0 0 17 17">
      {art[name]}
    </svg>
  );
}

function IeIcon({ color }) {
  return (
    <svg width="18" height="18" viewBox="0 0 18 18">
      <path d="M15 12a6 6 0 1 1 0-5v2H4" fill="none" stroke={color} strokeWidth="3" />
      <path d="M2 15C-1 9 10 1 16 3" fill="none" stroke="#f0e090" strokeWidth="1" />
    </svg>
  );
}

function PaintIcon() {
  return (
    <svg width="16" height="16" viewBox="0 0 16 16">
      <ellipse cx="7" cy="10" rx="6" ry="4" fill="#e8eef4" stroke="#889" />
      <circle cx="4" cy="10" r="1.5" fill="#e04040" />
      <circle cx="7" cy="12" r="1" fill="#30a040" />
      <circle cx="8" cy="8" r="1" fill="#3060d0" />
      <path d="M10 13l3-12 2 1-3 12z" fill="#f0a030" />
    </svg>
  );
}

/* ---------- charts ---------- */

function weekX(index) {
  return Math.round(5.7 + index * STEP);
}

function Candle({ data }) {
  const [index, kind, high, top, bottom, low] = data;
  const x = weekX(index);
  const color = candleColors[kind];
  const hollow = kind === 'r';
  return (
    <g shapeRendering="crispEdges">
      <path d={`M${x + 0.5} ${high}V${top}M${x + 0.5} ${bottom}V${low}`} stroke={kind === 'g' ? '#50ffff' : color} />
      <rect
        x={x - 2.5}
        y={top + 0.5}
        width="6"
        height={Math.max(bottom - top - 1, 1)}
        fill={hollow ? '#000' : color}
        stroke={color}
      />
    </g>
  );
}

function MainChart() {
  return (
    <svg width="100%" height="281" viewBox="1 142 1298 281" preserveAspectRatio="xMinYMin meet">
      {[167, 209, 250, 292, 333, 375].map((y) => (
        <path key={y} d={`M2 ${y}.5H1298`} stroke="#7c1010" strokeDasharray="1 3" shapeRendering="crispEdges" />
      ))}
      {levels.map(([color, x1, x2, y]) => (
        <path key={x1 + '-' + y} d={`M${x1} ${y}.5H${x2}`} stroke={color} shapeRendering="crispEdges" />
      ))}
      {candles.map((candle) => (
        <Candle key={candle[0]} data={candle} />
      ))}
      {dotRows.map(([color, from, to, y]) =>
        Array.from({ length: to - from + 1 }, (_, k) => (
          <circle key={y + '-' + (from + k)} cx={weekX(from + k)} cy={y} r="2" fill={color} />
        )),
      )}
      {zigzags.map(([color, points]) => (
        <polyline key={points} points={points} fill="none" stroke={color} shapeRendering="crispEdges" />
      ))}
      {arrows.map(([x1, x2, y]) => (
        <path
          key={x1}
          d={`M${x2} ${y}.5H${x1}l3 -3M${x1} ${y}.5l3 3`}
          fill="none"
          stroke={x1 < 200 || x1 === 331 || x1 === 419 || x1 === 1126 ? O : G}
        />
      ))}
      {marks.map(([text, color, x, y, bold]) => (
        <text
          key={text + x}
          x={x}
          y={y + 4}
          fill={color}
          fontSize={bold ? 14 : 12}
          fontWeight={bold ? 'bold' : 'normal'}
        >
          {text}
        </text>
      ))}
      <path d="M955 415l3-3 3 3" fill="none" stroke="#ff2020" strokeWidth="2" />
      <path d="M961 416h-5v3h4v3h-5M958 414v9" fill="none" stroke="#ff2020" />
    </svg>
  );
}

function WaveChart() {
  return (
    <svg width="100%" height="121" viewBox="1 443 1298 121" preserveAspectRatio="xMinYMin meet">
      <g shapeRendering="crispEdges">
        <rect x="2" y="443" width="1273" height="117" fill="#a8a8a8" />
        {goldBands.map(([x1, x2]) => (
          <rect key={x1} x={x1} y="443" width={x2 - x1} height="117" fill="#deae38" />
        ))}
        {waves.slice(1).map((value, i) => {
          const prev = waves[i];
          const rising = value < prev || (value === prev && i < 12);
          const top = Math.round(420 + Math.min(prev, value) / 3);
          const height = Math.max(Math.round(Math.abs(prev - value) / 3), 1) + 1;
          const x = Math.round(2 + i * STEP);
          return (
            <g key={i}>
              <rect x={x} y={top} width="12" height={height} fill={rising ? '#980000' : '#005858'} />
              <rect x={x + 1} y={top} width="9" height={height} fill={rising ? '#ee0000' : '#008080'} />
            </g>
          );
        })}
        <path d="M1278 501.5H1299" stroke="#7c1010" strokeDasharray="1 2" />
      </g>
      <path d="M1 436l7 10v28l-7 12z" fill="#c8b080" fillOpacity="0.6" stroke="#606060" />
      <path d="M2 453l4 4-4 4z" fill="#e89818" />
    </svg>
  );
}

function BandChart() {
  return (
    <svg width="100%" height="190" viewBox="1 584 1298 190" preserveAspectRatio="xMinYMin meet">
      <g shapeRendering="crispEdges">
        {[629, 659, 689, 719].map((y) => (
          <path key={y} d={`M2 ${y}.5H1298`} stroke="#7c1010" strokeDasharray="1 3" />
        ))}
        {greenBlocks.map(([x1, x2]) => (
          <rect key={x1} x={x1} y="584" width={x2 - x1} height="16" fill="#00ff00" />
        ))}
        {yellowBands.map(([x1, x2]) => (
          <rect key={x1} x={x1} y="600" width={x2 - x1} height="75" fill="#ffff00" />
        ))}
        {purpleBands.map(([x1, x2, color]) => (
          <rect key={x1} x={x1} y="675" width={x2 - x1} height="74" fill={color} />
        ))}
        <path d="M5 599.5H1265M5 674.5H1232" stroke="#20e028" />
        <path d="M94 599.5H172" stroke="#fff" />
        <path d="M5 614.5H1265" stroke="#20a0c8" />
        <path d="M5 740.5H1265" stroke="#189020" />
        <path d="M5 757.5H1265" stroke="#105810" />
      </g>
      <path d="M214 750h22l-6 7h-8zM520 749h17l-10 8zM1226 749h24l-5 8h-9z" fill="#98c808" />
      <path d="M233 749h17l-9 12zM1246 749h19v12l-9-1z" fill="#c83888" />
      <polyline points={blueLine} fill="none" stroke="#0000ee" strokeWidth="3" strokeLinejoin="round" />
      {redLines.map((points) => (
        <polyline key={points} points={points} fill="none" stroke="#e01010" />
      ))}
      <path d="M2 748.5H301" stroke="#f010e0" strokeWidth="3" />
      <path d="M5 748.5H1222" stroke="#c088c0" strokeWidth="2" />
      {magentaLines.map((points) => (
        <polyline key={points} points={points} fill="none" stroke="#f810e8" strokeWidth="3" />
      ))}
      {greenLines.map((points) => (
        <polyline key={points} points={points} fill="none" stroke="#20d820" />
      ))}
      {redBars.map((x) => (
        <rect key={x} x={x} y="719" width="7" height="30" fill="#ff0000" shapeRendering="crispEdges" />
      ))}
    </svg>
  );
}

function TimeRuler() {
  return (
    <svg width="100%" height="15" viewBox="1 775 1298 15" preserveAspectRatio="xMinYMin meet">
      {Array.from({ length: 131 }, (_, i) => (
        <path key={i} d={`M${Math.round(5 + i * STEP)}.5 775v2`} stroke={RED} />
      ))}
      {months.map(([text, x], i) => (
        <g key={x}>
          {i > 0 && <path d={`M${x - 2}.5 775v15`} stroke={RED} />}
          <text x={x} y="787" fill="#d03838" fontSize="12">
            {text}
          </text>
        </g>
      ))}
    </svg>
  );
}

// tick labels at the right edge of a chart
function AxisScale({ height, start, labels, minor }) {
  return (
    <svg width="49" height={height} viewBox={`0 ${start} 49 ${height}`}>
      {labels.map(([text, y]) => (
        <g key={text}>
          <path d={`M0 ${y}.5h5`} stroke={RED} />
          <text x="47" y={y + 5} fill="#d03838" fontSize="12" textAnchor="end">
            {text}
          </text>
        </g>
      ))}
      {minor.map((y) => (
        <path key={y} d={`M0 ${y}.5h3`} stroke={RED} />
      ))}
    </svg>
  );
}

function MixedText({ text }) {
  return text
    .split(/([\x20-\x7e]+)/)
    .filter(Boolean)
    .map((part) => (/[\x20-\x7e]/.test(part) ? <Latin key={part}>{part}</Latin> : part));
}

function StatRows({ rows }) {
  return rows.map(([name, value, color, name2, value2, color2, unit]) => (
    <QuoteRow key={name}>
      <QuoteCell>
        {name}
        <Figure $c={color}>{value}</Figure>
      </QuoteCell>
      <QuoteCell>
        {name2}
        <Figure $c={color2}>
          {value2}
          {unit && <i>{unit}</i>}
        </Figure>
      </QuoteCell>
    </QuoteRow>
  ));
}

function Header() {
  return (
    <>
      <TopBar>
        <Brand>
          <svg width="22" height="22" viewBox="0 0 22 22" fill="none" stroke="#eaf6ff" strokeWidth="2">
            <circle cx="11" cy="11" r="9.5" />
            <path d="M11 3v16M11 8c-8-1-8 7 0 6M11 8c8-1 8 7 0 6" />
          </svg>
          中泰证券
        </Brand>
        <RoundNav>
          <button type="button" aria-label="首页">
            <svg width="17" height="18" viewBox="0 0 17 18">
              <path d="M8.5 1L16 9h-2v8h-4v-5H7v5H3V9H1z" fill="#e8f0f8" stroke="#5a84b0" />
            </svg>
          </button>
          {['M11 5L6 9l5 5', 'M7 5l5 4-5 5', 'M4 11l5-5 5 5'].map((d) => (
            <button type="button" key={d} aria-label="导航">
              <svg width="18" height="18" viewBox="0 0 18 18">
                <circle cx="9" cy="9" r="9" fill="#e4ecf4" />
                <path d={d} fill="none" stroke="#305888" strokeWidth="3" />
              </svg>
            </button>
          ))}
        </RoundNav>
        <MenuBar>
          {menu.map((item, i) => (
            <MenuLink key={item} href="#" $active={i === 0}>
              {item}
            </MenuLink>
          ))}
        </MenuBar>
        <QuickList>
          {quick.map((item) => (
            <QuickButton type="button" key={item}>
              {item}
            </QuickButton>
          ))}
        </QuickList>
      </TopBar>
      <ToolBar>
        {bigTools.map(([label, width, icon]) => (
          <BigTool type="button" key={label} $w={width}>
            <ToolFrame>
              <ToolIcon name={icon} />
            </ToolFrame>
            {label}
          </BigTool>
        ))}
        <SmallTools>
          {smallTools.map(([label, icon]) => (
            <SmallTool type="button" key={label}>
              <SmallIcon name={icon} />
              {label}
            </SmallTool>
          ))}
        </SmallTools>
      </ToolBar>
    </>
  );
}

function Charts() {
  const [period, setPeriod] = useState('周线');
  const [tab, setTab] = useState('指标');

  return (
    <ChartColumn>
      <PeriodBar>
        <Periods>
          {periods.map((item) => (
            <PeriodButton type="button" key={item} $active={item === period} onClick={() => setPeriod(item)}>
              {item}
            </PeriodButton>
          ))}
        </Periods>
        {actions.map((item) => (
          <ChartAction type="button" key={item}>
            <MixedText text={item} />
          </ChartAction>
        ))}
      </PeriodBar>
      <Panel>
        <Plot>
          <Legend $h={17}>
            {legend1.map(([text, color, width]) => (
              <LegendItem key={text} $c={color} $w={width}>
                {text}
              </LegendItem>
            ))}
            <LegendTail>
              <svg width="12" height="12" viewBox="0 0 12 12">
                <path d="M6 1l5 5-5 5-5-5z" fill="none" stroke={RED} />
              </svg>
              <svg width="11" height="12" viewBox="0 0 11 12">
                <path d="M1 1h9v10H1zM7 1v10" fill="none" stroke={RED} />
              </svg>
            </LegendTail>
          </Legend>
          <LegendLine>B4: -</LegendLine>
          <MainChart />
        </Plot>
        <Axis>
          <PriceBox>
            <PriceGroup $gap={2}>
              <PriceLine $c="#fff">11.64</PriceLine>
              <PriceLine $c="#b0a820">164</PriceLine>
            </PriceGroup>
            <PriceGroup $gap={7}>
              <PriceLine $c="#fff">11.63</PriceLine>
              <PriceLine $c="#b0a820">115</PriceLine>
            </PriceGroup>
            <PriceGroup $gap={0}>
              <PriceLine $c={down}>11.63</PriceLine>
              <PriceLine $c={down}>▼-0.05</PriceLine>
              <PriceLine $c={down}>-0.43%</PriceLine>
              <PriceLine $c="#fff">405</PriceLine>
            </PriceGroup>
          </PriceBox>
          <AxisScale
            height={133}
            start={290}
            labels={[['25.00', 292], ['20.00', 333], ['15.00', 375]]}
            minor={[313, 354, 393, 403]}
          />
        </Axis>
      </Panel>
      <Panel>
        <Plot>
          <Legend $h={19}>
            <LegendItem $c="#c0c0c0">顶底&nbsp; QQ: 1.40</LegendItem>
          </Legend>
          <WaveChart />
        </Plot>
        <Axis>
          <AxisScale height={140} start={424} labels={[['50.00', 501]]} minor={[]} />
        </Axis>
      </Panel>
      <Panel>
        <Plot>
          <Legend $h={19}>
            {legend3.map(([text, color, width], i) => (
              <LegendItem key={i} $c={color} $w={width}>
                {text}
              </LegendItem>
            ))}
          </Legend>
          <BandChart />
        </Plot>
        <BoxedAxis>
          <AxisScale
            height={205}
            start={567}
            labels={[['100.0', 599], ['80.00', 629], ['60.00', 659], ['40.00', 689], ['20.00', 719]]}
            minor={[614, 644, 674, 704]}
          />
        </BoxedAxis>
      </Panel>
      <Panel>
        <Plot>
          <TimeRuler />
        </Plot>
        <PeriodName>{period}</PeriodName>
      </Panel>
      <TabRow $h={17}>
        <TabList>
          {tabs.map((item) => (
            <Tab type="button" key={item} $active={item === tab} onClick={() => setTab(item)}>
              <MixedText text={item} />
            </Tab>
          ))}
        </TabList>
        <ZoomBox>
          <button type="button">+</button>
          <button type="button">-</button>
          <button type="button">0</button>
        </ZoomBox>
      </TabRow>
      <TabRow $h={18}>
        <TabList>
          <Tab type="button">扩展∧</Tab>
          <Tab type="button">关联报价</Tab>
        </TabList>
      </TabRow>
    </ChartColumn>
  );
}

function Quotes() {
  return (
    <QuotePanel>
      <QuoteTitle>
        <b>000603</b>盛达矿业
      </QuoteTitle>
      <QuoteBlock $pad="0">
        <StatRows rows={[['委比', '-7.02%', '#14e014', '委差', '-66', down]]} />
      </QuoteBlock>
      {[sells, buys].map((rows) => (
        <QuoteBlock key={rows[0][0]}>
          {rows.map(([name, price, amount]) => (
            <QuoteRow key={name}>
              <QuoteCell>
                {name}
                <Figure $c={price === '11.68' ? '#fff' : down}>{price}</Figure>
              </QuoteCell>
              <QuoteCell>
                <span />
                <Figure $c={volume}>{amount}</Figure>
              </QuoteCell>
            </QuoteRow>
          ))}
        </QuoteBlock>
      ))}
      <QuoteBlock>
        <StatRows rows={stats} />
      </QuoteBlock>
      <QuoteBlock>
        <StatRows rows={basics} />
      </QuoteBlock>
      <QuoteBlock>
        <FlowRow>
          <span>净流入额</span>
          <Figure $c="#14e014">
            -141.1<i>万</i>
          </Figure>
          <Figure $c="#14e014">-5%</Figure>
        </FlowRow>
        <FlowRow>
          <span>大宗流入</span>
          <Figure $c="#fff">0.00</Figure>
          <Figure $c="#fff">0%</Figure>
        </FlowRow>
      </QuoteBlock>
      <TickTable>
        <tbody>
          {ticks.map(([time, price, amount, side, count], i) => (
            <tr key={i}>
              <td>{time}</td>
              <td>{price}</td>
              <td>{amount}</td>
              <td data-side={side}>{side}</td>
              <td>{count}</td>
            </tr>
          ))}
        </tbody>
      </TickTable>
      <QuoteTabs>
        {['笔', '价', '细', '势', '联', '值', '主', '筹'].map((item) => (
          <button type="button" key={item} aria-pressed={item === '笔'}>
            {item}
          </button>
        ))}
      </QuoteTabs>
    </QuotePanel>
  );
}

function Tools() {
  return (
    <SideBar>
      {['left', 'up', 'down', 'report', 'grid', 'line', 'candle', 'pages'].map((name) => (
        <SideButton type="button" key={name} aria-label={name}>
          <SideIcon name={name} />
        </SideButton>
      ))}
      <SideButton type="button"><SideBox>F10</SideBox></SideButton>
      <SideButton type="button" aria-label="tree"><SideIcon name="tree" /></SideButton>
      <SideButton type="button" $c="#e06020" $bold><SideBox>自</SideBox></SideButton>
      <SideButton type="button"><SideBox>F12</SideBox></SideButton>
      <SideButton type="button"><SideBox>f(x)</SideBox></SideButton>
      <SideButton type="button" aria-label="ring"><SideIcon name="ring" /></SideButton>
      <SideLine />
      <SideButton type="button" aria-label="waves"><SideIcon name="waves" /></SideButton>
      <SideButton type="button" $c="#3040c0" $size={9} $bold>RSI</SideButton>
      <SideButton type="button" aria-label="dollar"><SideIcon name="dollar" /></SideButton>
      <SideButton type="button" aria-label="move"><SideIcon name="move" /></SideButton>
      <SideButton type="button" aria-label="pencil"><SideIcon name="pencil" /></SideButton>
      <SideLine />
      <SideButton type="button"><SideBox>F5</SideBox></SideButton>
      <SideButton type="button" aria-label="refresh"><SideIcon name="refresh" /></SideButton>
      {['1', '5', '15', '30', '60', '日', '周', '月', 'N', '多', '季', '年'].map((item) => (
        <SideButton type="button" key={item} $active={item === '周'}>
          {item}
        </SideButton>
      ))}
    </SideBar>
  );
}

function Status() {
  return (
    <StatusBar>
      <svg width="14" height="14" viewBox="0 0 14 14">
        <rect width="14" height="14" rx="2" fill="#f0a828" />
        <path d="M5 2h7v6H5zM2 6h6v6H2z" fill="#f8c860" stroke="#fff" />
      </svg>
      {indexes.map(([name, value, change, percent, amount], i) => (
        <IndexQuote key={name} $first={i === 0}>
          <span>{name}</span>
          <b>{value}</b>
          <b>{change}</b>
          <b>{percent}</b>
          <span>
            <small>{amount}</small>亿
          </span>
        </IndexQuote>
      ))}
      <LightBox>
        <svg width="98" height="14" viewBox="0 0 98 14" shapeRendering="crispEdges">
          <path d="M0 0h46v5H0zM52 0h46v5H52z" fill="#fff" />
          <path d="M8 0h12v5H8zM67 0h5v5h-5z" fill="#e01010" />
          <path d="M21 0h10v5H21zM73 0h10v5H73z" fill="#088808" />
          <path d="M0 8.5h46M0 12h46" stroke="#d01818" strokeWidth="3" strokeDasharray="6 2" />
          <path d="M52 8.5h46M52 12h46" stroke="#088808" strokeWidth="3" strokeDasharray="6 2" />
          <path d="M0 10.5h98" stroke="#f0f0f0" />
        </svg>
      </LightBox>
      <UserName>ztsshy2</UserName>
      <StatusIcons>
        <svg width="15" height="12" viewBox="0 0 15 12">
          <rect x="0.5" y="0.5" width="14" height="11" rx="2" fill="#fff" stroke="#4878c0" />
          <path d="M4 6h7M6 9h5" stroke="#c8a030" />
        </svg>
        <svg width="14" height="13" viewBox="0 0 14 13">
          <rect x="0.5" y="0.5" width="13" height="12" fill="#fff" stroke="#888" />
          <path d="M1 3h12M1 6h12M1 9h12" stroke="#bbb" />
        </svg>
        <svg width="13" height="13" viewBox="0 0 13 13">
          <rect width="13" height="13" rx="3" fill="#d8c820" stroke="#908010" />
          <path d="M6 2l4 4H8v4H5V6H3z" fill="#fff" />
        </svg>
        <svg width="13" height="15" viewBox="0 0 13 15" fill="none" stroke="#787850">
          <path d="M2 1c-2 2-2 4 0 6M4 2c-1 1-1 3 0 4M11 1c2 2 2 4 0 6M9 2c1 1 1 3 0 4M6 4v4l-3 6h7L7 8" />
        </svg>
        <svg width="9" height="13" viewBox="0 0 9 13">
          <path d="M4 0l4 4H1zM4 4l4 4H1zM3 8h3v5H3z" fill="#666" />
        </svg>
        <svg width="5" height="13" viewBox="0 0 5 13">
          <circle cx="2" cy="3" r="2" fill="#666" />
          <path d="M2 6v4" stroke="#666" />
        </svg>
      </StatusIcons>
    </StatusBar>
  );
}

function Dots() {
  return (
    <svg width="9" height="22" viewBox="0 0 9 22">
      {[2, 6, 10, 14, 18].map((y) => (
        <path key={y} d={`M0 ${y}h2m1 0h2m1 0h2`} stroke="#10406c" strokeWidth="2" />
      ))}
    </svg>
  );
}

function Tasks() {
  return (
    <TaskBar>
      <StartButton type="button" aria-label="开始">
        <svg width="37" height="36" viewBox="0 0 37 36">
          <circle cx="18" cy="18" r="17" fill="#24608c" stroke="#88b4d0" strokeWidth="1.5" />
          <ellipse cx="18" cy="10" rx="13" ry="7" fill="#a8c8dc" fillOpacity="0.6" />
          <path d="M10 10c3-2 6-2 9 0l-3 8c-2-2-6-2-9 0z" fill="#f06028" />
          <path d="M20 11c3 2 6 2 9 0l-3 8c-3 2-6 2-9 0z" fill="#88c838" />
          <path d="M7 19c3-2 6-2 9 0l-3 8c-3-2-6-2-8 0z" fill="#48a8e8" />
          <path d="M17 20c3 2 6 2 9 0l-3 8c-3 2-6 2-8 0z" fill="#f8d040" />
        </svg>
      </StartButton>
      <LaunchIcon type="button" aria-label="浏览" $w={40}>
        <svg width="18" height="18" viewBox="0 0 18 18">
          <circle cx="6" cy="5" r="4" fill="#3868d0" />
          <circle cx="12" cy="5" r="4" fill="#58b838" />
          <circle cx="6" cy="12" r="4" fill="#e04828" />
          <circle cx="12" cy="12" r="4" fill="#f0b828" />
        </svg>
      </LaunchIcon>
      <LaunchIcon type="button" aria-label="浏览器" $w={50}><IeIcon color="#d8efff" /></LaunchIcon>
      <LaunchIcon as="span" $w={20}><Dots /></LaunchIcon>
      <TaskButton type="button">
        <IeIcon color="#50b840" />
        盛达矿业还要创新低...
      </TaskButton>
      <LaunchIcon type="button" aria-label="IE" $w={44}><IeIcon color="#1858b8" /></LaunchIcon>
      <LaunchIcon type="button" aria-label="文件夹" $w={46}>
        <svg width="17" height="16" viewBox="0 0 17 16">
          <path d="M1 2h6l2 2h6v10H1z" fill="#f0d888" stroke="#a88838" />
          <path d="M4 8h9v7H4z" fill="#78b8d8" />
        </svg>
      </LaunchIcon>
      <LaunchIcon type="button" aria-label="播放器" $w={46}>
        <svg width="15" height="16" viewBox="0 0 15 16">
          <rect width="15" height="16" rx="1" fill="#f08020" />
          <circle cx="7" cy="8" r="6" fill="#fff" />
          <path d="M5 4l6 4-6 4z" fill="#e86808" />
        </svg>
      </LaunchIcon>
      <LaunchIcon type="button" aria-label="音乐" $w={46}>
        <svg width="17" height="17" viewBox="0 0 17 17">
          <circle cx="8.5" cy="8.5" r="8" fill="#f8d020" />
          <path d="M9 1c1 3 5 4 2 8-1-2-2-2-2-2v5a3 3 0 1 1-2-3z" fill="#209038" />
        </svg>
      </LaunchIcon>
      <TaskButton type="button" $pad={9} $joined><PaintIcon />无标题4 - 画图</TaskButton>
      <TaskButton type="button"><PaintIcon />盛 - 画图</TaskButton>
      <TaskButton type="button">
        <svg width="14" height="16" viewBox="0 0 14 16">
          <rect x="1" y="2" width="12" height="13" fill="#d8f0f8" stroke="#609cb8" />
          <path d="M3 6h8M3 9h8M3 12h8" stroke="#78b0c8" />
          <path d="M2 1h10" stroke="#506070" strokeWidth="2" strokeDasharray="1 1" />
        </svg>
        密码 (2) - 记事本
      </TaskButton>
      <TaskButton type="button" $active>
        <svg width="16" height="16" viewBox="0 0 16 16" fill="none" stroke="#a02038" strokeWidth="1.5">
          <circle cx="8" cy="8" r="7" />
          <path d="M8 2v12M4 5h8v5H4z" />
        </svg>
        融易汇V1.41 - [组合...
      </TaskButton>
      <Tray>
        <Dots />
        <svg width="16" height="12" viewBox="0 0 16 12">
          <rect y="3" width="16" height="9" rx="1" fill="#e0e0d8" />
          <path d="M2 6h12M2 9h12" stroke="#777" strokeDasharray="1 1" />
          <path d="M8 3c0-3 4 0 4-3" fill="none" stroke="#ccc" />
        </svg>
        <svg width="16" height="16" viewBox="0 0 16 16">
          <circle cx="8" cy="8" r="7" fill="#1830b0" stroke="#fff" />
          <text x="8" y="12" fill="#fff" fontSize="12" fontWeight="bold" textAnchor="middle">?</text>
        </svg>
        <svg width="10" height="18" viewBox="0 0 10 18">
          <path d="M3 1h6v4H3zM1 3h6v4H1z" fill="none" stroke="#fff" />
          <path d="M2 13h6l-3 3z" fill="#fff" />
        </svg>
        <svg width="10" height="6" viewBox="0 0 10 6">
          <path d="M1 5l4-4 4 4z" fill="#fff" />
        </svg>
        <svg width="17" height="17" viewBox="0 0 17 17">
          <circle cx="8.5" cy="8.5" r="8" fill="#58b828" />
          <path d="M1 6a8 8 0 0 0 15 5" fill="none" stroke="#f8e020" strokeWidth="4" />
          <circle cx="8" cy="8" r="5" fill="#f8e838" />
          <path d="M8 4v8M4 8h8" stroke="#206818" strokeWidth="2" />
        </svg>
        <svg width="16" height="16" viewBox="0 0 16 16" fill="none" stroke="#fff">
          <path d="M5 5h10v8H5zM7 15h6M2 1v5M0 4h4v3H0zM2 7v8h3" />
        </svg>
        <svg width="16" height="14" viewBox="0 0 16 14">
          <path d="M1 5h3l4-4v12L4 9H1z" fill="#fff" />
          <rect x="7" y="6" width="8" height="8" rx="2" fill="#e03020" />
          <path d="M9 8l4 4m0-4l-4 4" stroke="#fff" />
        </svg>
        <Clock>19:07</Clock>
        <ShowDesktop type="button" aria-label="显示桌面" />
      </Tray>
    </TaskBar>
  );
}

export default function App() {
  return (
    <Page>
      <GlobalStyle />
      <Header />
      <WorkArea>
        <LeftPart>
          <Workspace>
            <Charts />
            <Quotes />
          </Workspace>
          <Blank />
          <Status />
        </LeftPart>
        <Tools />
      </WorkArea>
      <Tasks />
      <GreenBall />
      <Watermark>
        <WatermarkTop>
          <b>股海网</b>股票软件资源分享
        </WatermarkTop>
        <WatermarkUrl href="#">Www.Guhai.com.cn</WatermarkUrl>
      </Watermark>
    </Page>
  );
}
